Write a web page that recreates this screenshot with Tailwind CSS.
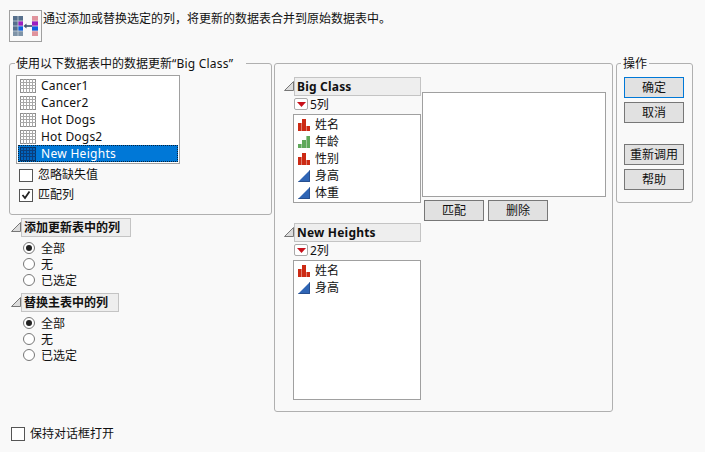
<!DOCTYPE html>
<html lang="zh">
<head>
<meta charset="utf-8">
<script src="https://cdn.jsdelivr.net/npm/@tailwindcss/browser@4"></script>
</head>
<body class="m-0">
<svg width="0" height="0" class="absolute">
  <defs>
    <g id="grid"><rect x="0.5" y="0.5" width="15" height="13" fill="#fff" stroke="#8f8f8f"/><path d="M0 3.5H16M0 6.5H16M0 9.5H16M3.5 0V14M6.5 0V14M9.5 0V14M12.5 0V14" stroke="#a8a8a8" fill="none"/></g>
    <g id="gridsel"><rect x="0.5" y="0.5" width="15" height="13" fill="#0063bd" stroke="#06366a"/><path d="M0 3.5H16M0 6.5H16M0 9.5H16M3.5 0V14M6.5 0V14M9.5 0V14M12.5 0V14" stroke="#0a3f7c" fill="none"/></g>
    <g id="nom"><rect x="0" y="4" width="3.6" height="8" fill="#cc2a14"/><rect x="4" y="0" width="4" height="12" fill="#cc2a14"/><rect x="8.4" y="7" width="3.6" height="5" fill="#cc2a14"/></g>
    <g id="ord"><rect x="0" y="8" width="3.6" height="4" fill="#5fa85a"/><rect x="4" y="4" width="4" height="8" fill="#5fa85a"/><rect x="8.4" y="0" width="3.6" height="12" fill="#5fa85a"/></g>
    <g id="con"><path d="M0 12L12 0V12Z" fill="#2f65b5"/><path d="M0.5 11.5H11.5V0.5" fill="none" stroke="#274f8f"/></g>
  </defs>
</svg>
<div class="w-[705px] h-[452px] bg-[#f9f9f9] overflow-hidden flex flex-col text-[12px] leading-[17px] text-[#111] font-['Noto_Sans','Noto_Sans_CJK_SC',sans-serif]">
  <div class="flex h-[63px] pl-[9px] pt-[10px]">
    <div class="w-[33px] h-[32px] border border-[#a0a0a0] bg-[#f9f9f9] flex items-center justify-center">
      <svg width="27" height="22" viewBox="0 0 27 22">
        <rect x="1" y="1" width="10" height="20" fill="#566f8c"/>
        <rect x="6" y="6" width="5" height="5" fill="#9a1fc0"/>
        <rect x="6" y="11" width="5" height="5" fill="#1060e0"/>
        <rect x="1" y="16" width="10" height="5" fill="#7f94a8"/>
        <path d="M6 1V21M1 6H11M1 11H11M1 16H11" stroke="#c5d0da" stroke-width="0.8" fill="none"/>
        <path d="M13 11H20" stroke="#5a6f85" stroke-width="2"/>
        <path d="M11.5 11L14.5 8.5V13.5Z" fill="#3f5670"/>
        <rect x="20" y="1" width="6" height="20" fill="#e0939c"/>
        <rect x="20" y="6" width="6" height="5" fill="#9a1fc0"/>
        <rect x="20" y="11" width="6" height="5" fill="#1060e0"/>
        <path d="M20 6H26M20 11H26M20 16H26" stroke="#e8d0d5" stroke-width="0.8" fill="none"/>
      </svg>
    </div>
    <span class="ml-[1px]">通过添加或替换选定的列，将更新的数据表合并到原始数据表中。</span>
  </div>

  <div class="flex h-[349px] pl-[9px] gap-[2px]">
    <div class="w-[263px] flex flex-col">
      <div class="relative w-[263px] h-[152px] border border-[#b0b0b0] rounded-[3px] pl-[6px] pt-[11px]">
        <span class="absolute left-[5px] top-[-9px] bg-[#f9f9f9] pl-[1px] pr-[13px]">使用以下数据表中的数据更新<span class="tracking-[0.2px]">“Big Class”</span></span>
        <div class="w-[164px] h-[89px] border border-[#a0a0a0] bg-white p-[1px] flex flex-col">
          <div class="h-[17px] flex items-center pl-[2px] gap-[5px]"><svg class="shrink-0" width="16" height="14"><use href="#grid"/></svg><span class="tracking-[0.2px]">Cancer1</span></div>
          <div class="h-[17px] flex items-center pl-[2px] gap-[5px]"><svg class="shrink-0" width="16" height="14"><use href="#grid"/></svg><span class="tracking-[0.2px]">Cancer2</span></div>
          <div class="h-[17px] flex items-center pl-[2px] gap-[5px]"><svg class="shrink-0" width="16" height="14"><use href="#grid"/></svg><span class="tracking-[0.2px]">Hot Dogs</span></div>
          <div class="h-[17px] flex items-center pl-[2px] gap-[5px]"><svg class="shrink-0" width="16" height="14"><use href="#grid"/></svg><span class="tracking-[0.2px]">Hot Dogs2</span></div>
          <div class="h-[17px] flex items-center pl-[1px] gap-[5px] bg-[#0078d7] text-white border border-dotted border-[#06223c]"><svg class="shrink-0" width="16" height="14"><use href="#gridsel"/></svg><span class="tracking-[0.3px]">New Heights</span></div>
        </div>
        <div class="flex items-center h-[20px] mt-[1px] ml-[3px] gap-[5px]"><span class="w-[14px] h-[13px] border border-[#555] bg-white"></span><span class="pb-[2px]">忽略缺失值</span></div>
        <div class="flex items-center h-[20px] ml-[3px] gap-[5px]"><span class="w-[14px] h-[13px] border border-[#555] bg-white flex items-center justify-center"><svg width="10" height="10" viewBox="0 0 10 10"><path d="M1.5 5L4 8L8.5 1.5" stroke="#222" stroke-width="1.8" fill="none"/></svg></span><span class="pb-[2px]">匹配列</span></div>
      </div>
      <div class="flex mt-[3px] ml-[2px] h-[19px]">
        <svg class="mt-[4px] shrink-0" width="10" height="10"><path d="M0.5 9.5H9.5V0.5Z" fill="#dcdcdc" stroke="#777"/></svg>
        <div class="w-[110px] border border-[#c4c4c4] bg-[#eeeeee] px-[2px] font-bold leading-[17px]">添加更新表中的列</div>
      </div>
      <div class="ml-[14px] mt-[3px] flex flex-col">
        <div class="flex items-center h-[16px] gap-[6px]"><span class="w-[12px] h-[12px] rounded-full border border-[#777] bg-white flex items-center justify-center"><span class="w-[6px] h-[6px] rounded-full bg-[#222]"></span></span><span>全部</span></div>
        <div class="flex items-center h-[16px] gap-[6px]"><span class="w-[12px] h-[12px] rounded-full border border-[#777] bg-white"></span><span>无</span></div>
        <div class="flex items-center h-[16px] gap-[6px]"><span class="w-[12px] h-[12px] rounded-full border border-[#777] bg-white"></span><span>已选定</span></div>
      </div>
      <div class="flex mt-[5px] ml-[2px] h-[19px]">
        <svg class="mt-[4px] shrink-0" width="10" height="10"><path d="M0.5 9.5H9.5V0.5Z" fill="#dcdcdc" stroke="#777"/></svg>
        <div class="w-[98px] border border-[#c4c4c4] bg-[#eeeeee] px-[2px] font-bold leading-[17px]">替换主表中的列</div>
      </div>
      <div class="ml-[14px] mt-[3px] flex flex-col">
        <div class="flex items-center h-[16px] gap-[6px]"><span class="w-[12px] h-[12px] rounded-full border border-[#777] bg-white flex items-center justify-center"><span class="w-[6px] h-[6px] rounded-full bg-[#222]"></span></span><span>全部</span></div>
        <div class="flex items-center h-[16px] gap-[6px]"><span class="w-[12px] h-[12px] rounded-full border border-[#777] bg-white"></span><span>无</span></div>
        <div class="flex items-center h-[16px] gap-[6px]"><span class="w-[12px] h-[12px] rounded-full border border-[#777] bg-white"></span><span>已选定</span></div>
      </div>
    </div>

    <div class="w-[339px] h-[349px] border border-[#b0b0b0] rounded-[3px] flex pl-[9px] pt-[13px]">
      <div class="w-[138px] flex flex-col">
        <div class="flex h-[19px]">
          <svg class="mt-[4px] shrink-0" width="10" height="10"><path d="M0.5 9.5H9.5V0.5Z" fill="#dcdcdc" stroke="#777"/></svg>
          <div class="w-[127px] border border-[#c4c4c4] bg-[#eeeeee] px-[2px] font-bold leading-[17px] tracking-[0.2px]">Big Class</div>
        </div>
        <div class="flex items-center h-[12px] mt-[2px] ml-[10px] gap-[2px]">
          <span class="w-[14px] h-[12px] border border-[#aaa] rounded-[2px] bg-white flex items-center justify-center"><svg width="9" height="5"><path d="M0 0H9L4.5 5Z" fill="#c8101a"/></svg></span><span>5列</span>
        </div>
        <div class="w-[128px] h-[89px] ml-[9px] mt-[4px] border border-[#a0a0a0] bg-white pt-[1px] pl-[4px] flex flex-col">
          <div class="h-[17px] flex items-center gap-[5px]"><svg width="12" height="12"><use href="#nom"/></svg><span>姓名</span></div>
          <div class="h-[17px] flex items-center gap-[5px]"><svg width="12" height="12"><use href="#ord"/></svg><span>年龄</span></div>
          <div class="h-[17px] flex items-center gap-[5px]"><svg width="12" height="12"><use href="#nom"/></svg><span>性别</span></div>
          <div class="h-[17px] flex items-center gap-[5px]"><svg width="12" height="12"><use href="#con"/></svg><span>身高</span></div>
          <div class="h-[17px] flex items-center gap-[5px]"><svg width="12" height="12"><use href="#con"/></svg><span>体重</span></div>
        </div>
        <div class="flex h-[19px] mt-[20px]">
          <svg class="mt-[4px] shrink-0" width="10" height="10"><path d="M0.5 9.5H9.5V0.5Z" fill="#dcdcdc" stroke="#777"/></svg>
          <div class="w-[127px] border border-[#c4c4c4] bg-[#eeeeee] px-[2px] font-bold leading-[17px] tracking-[0.2px]">New Heights</div>
        </div>
        <div class="flex items-center h-[12px] mt-[2px] ml-[10px] gap-[2px]">
          <span class="w-[14px] h-[12px] border border-[#aaa] rounded-[2px] bg-white flex items-center justify-center"><svg width="9" height="5"><path d="M0 0H9L4.5 5Z" fill="#c8101a"/></svg></span><span>2列</span>
        </div>
        <div class="w-[128px] h-[140px] ml-[9px] mt-[4px] border border-[#a0a0a0] bg-white pt-[1px] pl-[4px] flex flex-col">
          <div class="h-[17px] flex items-center gap-[5px]"><svg width="12" height="12"><use href="#nom"/></svg><span>姓名</span></div>
          <div class="h-[17px] flex items-center gap-[5px]"><svg width="12" height="12"><use href="#con"/></svg><span>身高</span></div>
        </div>
      </div>
      <div class="flex flex-col mt-[15px]">
        <div class="w-[184px] h-[105px] border border-[#a0a0a0] bg-white"></div>
        <div class="flex gap-[4px] mt-[3px] ml-[2px]">
          <div class="w-[60px] h-[21px] border border-[#777] bg-[#e1e1e1] flex items-center justify-center">匹配</div>
          <div class="w-[60px] h-[21px] border border-[#777] bg-[#e1e1e1] flex items-center justify-center">删除</div>
        </div>
      </div>
    </div>

    <div class="relative w-[77px] h-[140px] ml-[1px] border border-[#b0b0b0] rounded-[3px] pl-[7px] pt-[13px] flex flex-col">
      <span class="absolute left-[4px] top-[-9px] bg-[#f9f9f9] px-[2px]">操作</span>
      <div class="w-[60px] h-[21px] border border-[#0078d7] bg-[#e1e1e1] flex items-center justify-center">确定</div>
      <div class="w-[60px] h-[21px] mt-[4px] border border-[#777] bg-[#e1e1e1] flex items-center justify-center">取消</div>
      <div class="w-[60px] h-[21px] mt-[21px] border border-[#777] bg-[#e1e1e1] flex items-center justify-center">重新调用</div>
      <div class="w-[60px] h-[21px] mt-[4px] border border-[#777] bg-[#e1e1e1] flex items-center justify-center">帮助</div>
    </div>
  </div>

  <div class="flex items-center h-[14px] mt-[15px] ml-[11px] gap-[5px]"><span class="w-[14px] h-[14px] border border-[#555] bg-white"></span><span class="pb-[2px]">保持对话框打开</span></div>
</div>
</body>
</html>
